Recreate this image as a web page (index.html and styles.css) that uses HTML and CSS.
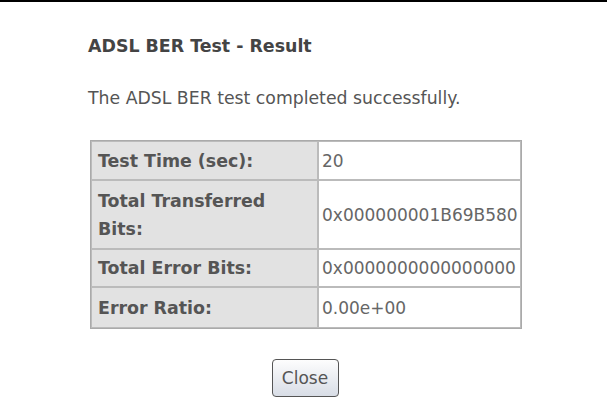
FILE: index.html
```html
<!DOCTYPE html>
<html>
<head>
<meta charset="utf-8">
<link rel="stylesheet" href="styles.css">
</head>
<body>
<div class="topline"></div>
<div class="content">
  <h1 class="title">ADSL BER Test - Result</h1>
  <p class="msg">The ADSL BER test completed successfully.</p>
  <table class="result">
    <colgroup><col class="c1"><col class="c2"></colgroup>
    <tr class="r1"><td class="lbl">Test Time (sec):</td><td class="val">20</td></tr>
    <tr class="r2"><td class="lbl">Total Transferred<br>Bits:</td><td class="val">0x000000001B69B580</td></tr>
    <tr class="r3"><td class="lbl">Total Error Bits:</td><td class="val">0x0000000000000000</td></tr>
    <tr class="r4"><td class="lbl">Error Ratio:</td><td class="val">0.00e+00</td></tr>
  </table>
  <div class="actions"><button class="btn">Close</button></div>
</div>
</body>
</html>
```
FILE: styles.css
```css
html, body { margin: 0; padding: 0; background: #fff; }
body { font-family: "DejaVu Sans", Verdana, sans-serif; color: #333; }
.topline { height: 2px; background: #000; }
.content { padding: 0 0 0 88px; }
.title { margin: 0; padding-top: 34px; font-size: 17.4px; font-weight: bold; color: #444; line-height: 20px; }
.msg { margin: 0; padding-top: 32px; font-size: 17.3px; color: #555; line-height: 20px; }
.result { margin-top: 32px; margin-left: 2px; border-collapse: separate; border-spacing: 0; border: 1px solid #aaa; width: 432px; table-layout: fixed; }
.c1 { width: 227px; }
.c2 { width: 203px; }
.result td { border: 1px solid #bbb; padding: 0 6px; white-space: nowrap; }
.result .lbl { background: #e2e2e2; font-weight: bold; font-size: 17.4px; color: #555; line-height: 28px; }
.result .val { background: #fff; font-size: 17px; color: #666; padding: 0 2px 0 3px; }
.r1 td { height: 37px; }
.r2 td { height: 67px; }
.r3 td { height: 36px; }
.r4 td { height: 39px; }
.actions { width: 434px; text-align: center; padding-top: 30px; }
.btn { font-family: "DejaVu Sans", sans-serif; font-size: 17px; color: #555; width: 67px; height: 38px; padding: 0; border: 1px solid #555; border-radius: 4px; background: linear-gradient(#fdfdfd, #d8dde6); }
```
